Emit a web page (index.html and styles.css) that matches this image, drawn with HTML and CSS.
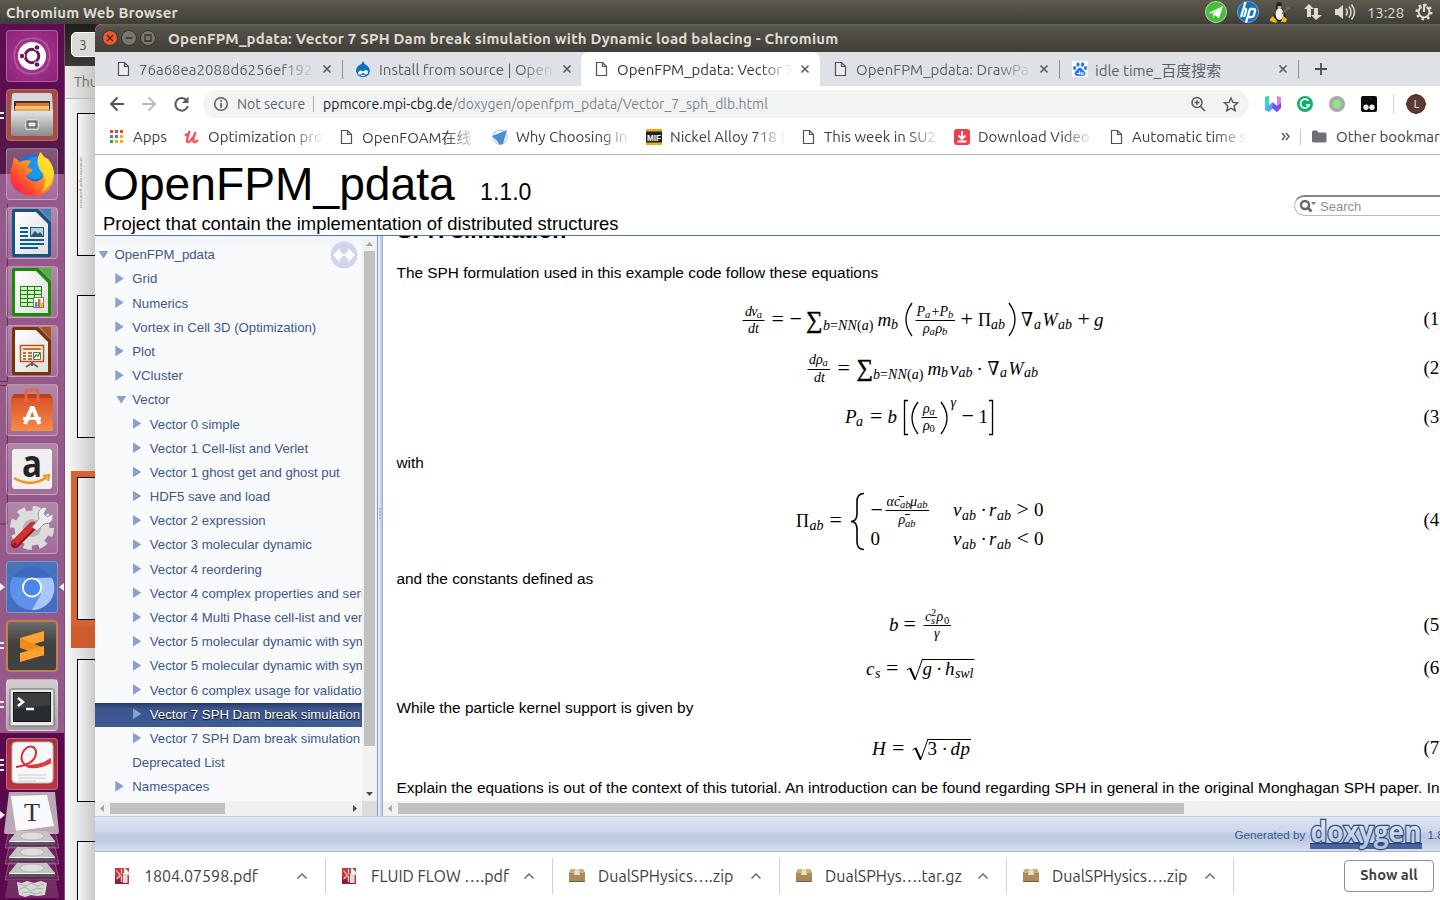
FILE: index.html
```html
<!DOCTYPE html>
<html lang="en">
<head>
<meta charset="utf-8">
<title>OpenFPM_pdata: Vector 7 SPH Dam break simulation with Dynamic load balacing</title>
<link rel="stylesheet" href="styles.css">
</head>
<body>
<svg width="0" height="0" class="defs">
  <defs>
    <symbol id="page" viewBox="0 0 16 16"><path d="M3.5 1.5h6l4 4v9h-10z M9.5 1.5v4h4" fill="#fff" fill-opacity=".4" stroke="#4d5054" stroke-width="1.2"/></symbol>
    <symbol id="close" viewBox="0 0 10 10"><path d="M1.500 1.500l7 7M8.500 1.500l-7 7" stroke="#55585c" stroke-width="1.5"/></symbol>
    <symbol id="chev" viewBox="0 0 12 8"><path d="M1.500 6.500L6 2l4.500 4.500" fill="none" stroke="#6b6e72" stroke-width="1.500"/></symbol>
    <symbol id="pdf" viewBox="0 0 16 16"><path d="M0 0h14v16H0z" fill="#d0343a"/><path d="M0 9l14 7H0z" fill="#8d1d35"/><path d="M8 5h4.500v10H8z" fill="#e2dcda"/><path d="M9 0h1l4 4v3H9z" fill="#f4f1f0" stroke="#aaa" stroke-width=".5"/><path d="M1.500 2.500l4 5-4 3.500M6.500 6V1M6.500 8v6" fill="none" stroke="#f5dcda" stroke-width="1.200"/></symbol>
    <symbol id="box" viewBox="0 0 16 16"><path d="M2 1h12l2 4v9H0V5z" fill="#a98a5b"/><path d="M2 1h12l2 4H0z" fill="#c9ad7d"/><path d="M6 1h4l1 6H5z" fill="#eadfbe"/><path d="M0 13h16v1H0z" fill="#765b35"/></symbol>
    <linearGradient id="doc" x1="0" y1="0" x2="1" y2="1"><stop offset="0" stop-color="#fff"/><stop offset="1" stop-color="#ddd"/></linearGradient>
    <linearGradient id="metal" x1="0" y1="0" x2="0" y2="1"><stop offset="0" stop-color="#e4e4e4"/><stop offset="1" stop-color="#8b8b8b"/></linearGradient>
    <linearGradient id="fox" x1="1" y1="0" x2="0" y2="1"><stop offset="0" stop-color="#fff44f"/><stop offset=".4" stop-color="#ffa01e"/><stop offset=".75" stop-color="#ff3b36"/><stop offset="1" stop-color="#d9207c"/></linearGradient>
    <linearGradient id="bag" x1="0" y1="0" x2="0" y2="1"><stop offset="0" stop-color="#d9552b"/><stop offset="1" stop-color="#f78a45"/></linearGradient>
    <linearGradient id="doxy" x1="0" y1="0" x2="0" y2="1"><stop offset="0" stop-color="#eef3fb"/><stop offset="1" stop-color="#a9bfdf"/></linearGradient>
    <symbol id="disk" viewBox="0 0 56 20"><path d="M5 1h46l4 17H1z" fill="#fff" fill-opacity=".1" stroke="#b78ab0" stroke-opacity=".5"/><path d="M13 1h30l8 10H5z" fill="#c4c4c4"/><ellipse cx="28" cy="6" rx="12" ry="4" fill="#dedede" stroke="#a6a6a6" stroke-width=".7"/><path d="M5 11h46v4H5z" fill="#555"/><path d="M5 11h46v1H5z" fill="#f4f4f4"/></symbol>
  </defs>
</svg>

<header class="panel">
  <b class="panel-title">Chromium Web Browser</b>
  <div class="tray">
    <svg class="t1" width="22" height="22"><circle cx="11" cy="11" r="10.500" fill="#43bf35" stroke="#b9dcae"/><path d="M3.500 12L18 5l-4 12.500-4-3.500-2 3v-4.500l6-4-7.500 4z" fill="#fff"/></svg>
    <svg class="t2" width="22" height="22"><circle cx="11" cy="11" r="10.500" fill="#1572b8" stroke="#5caadc"/><path d="M8.500 1L4 16M5.500 9q4.500-3 3.500 1L7 16M13 8L9 21.500M12.500 8h4q2 0 1.500 2l-1 4q-.5 2-2 2H10.500" fill="none" stroke="#fff" stroke-width="2.300"/></svg>
    <svg class="t3" width="22" height="22"><path d="M5 12Q6 8 6 5q0-4 3-4t3 4q0 3 3 7 2 8-6 8t-6-4z" fill="#222"/><ellipse cx="9.500" cy="13" rx="4" ry="6" fill="#eee"/><path d="M7 6q2.500-2 5 0-2 2.500-5 0" fill="#edb63c"/><path d="M0 18l3-3 4 5-1 2-6-2zM11 21l2-6 4 3-1 3z" fill="#f2b817"/><path d="M12 13l6-6M17 6.500l3 1" stroke="#7d6a52" stroke-width="1.700"/></svg>
    <svg class="t4" width="18" height="18"><path d="M5 1l5 5H7v8H3V6H0zM12 17l-5-5h3V5h4v7h4z" fill="#dfdbd2"/></svg>
    <svg class="t5" width="22" height="18"><path d="M1 6h3l5-4v14l-5-4H1z" fill="#dfdbd2"/><path d="M12 5.500q2.500 3.500 0 7M15 3.500q4 5.500 0 11M17.500 1.500q6 7.500 0 15" fill="none" stroke="#dfdbd2" stroke-width="1.500"/></svg>
    <span class="clock">13:28</span>
    <svg class="t6" width="18" height="18"><circle cx="9" cy="9" r="7.200" fill="none" stroke="#dfdbd2" stroke-width="2.800" stroke-dasharray="2.400 3.255"/><path d="M6.500 4A5.500 5.500 0 1 0 11.500 4M9 1v8" fill="none" stroke="#dfdbd2" stroke-width="2"/></svg>
  </div>
</header>

<div class="desktop">
  <nav class="launcher">
    <div class="tile ubuntu"><svg viewBox="0 0 52 52"><path d="M8 26C8 8 30 2 42 16M44 26c0 18-22 24-34 10M26 8c18 0 24 22 10 34M26 44C8 44 2 22 16 10" fill="none" stroke="#c57ab9" stroke-opacity=".55" stroke-width="1.500"/><circle cx="26" cy="26" r="14" fill="#fff"/><circle cx="26" cy="26" r="6.800" fill="none" stroke="#6f195c" stroke-width="3"/><g fill="#6f195c" stroke="#fff" stroke-width="1"><circle cx="16" cy="26" r="2.800"/><circle cx="31" cy="17.500" r="2.800"/><circle cx="31" cy="34.500" r="2.800"/></g></svg></div>
    <div class="tile files"><svg viewBox="0 0 52 52"><path d="M6 6q0-2 2-2h36q2 0 2 2l1 18H5z" fill="#d7d7d7"/><path d="M8 12h36v12H8z" fill="#333"/><path d="M10 14h33v8H10z" fill="#e7752d"/><path d="M9 17h34v7H9z" fill="#f6c17c"/><path d="M8 21h36" stroke="#e88335"/><path d="M5 22h42v23q0 2-2 2H7q-2 0-2-2z" fill="url(#metal)"/><rect x="19.500" y="30.500" width="13" height="10" rx="2" fill="#999" stroke="#ddd"/><rect x="22" y="33" width="8" height="5" fill="#eee" stroke="#444"/></svg></div>
    <div class="tile"><svg viewBox="0 0 52 52"><circle cx="26" cy="27" r="20" fill="#1d6fe0"/><circle cx="29" cy="20" r="11" fill="#1b95f2"/><path d="M6 18L8 9l6 5q4-3 11-1l-4 6 6 3-7 6q5 7 12 5 8-3 4-11-6-6-4-13l3-5q2 5 7 7 7 8 6 17-2 20-22 20Q5 46 4 28q0-6 2-10" fill="url(#fox)"/><path d="M34 4q2 6 8 8 8 10 4 20-3 8-11 13 7-9 3-18-8-7-6-17z" fill="#ffe32e" fill-opacity=".8"/></svg></div>
    <div class="tile"><svg viewBox="0 0 52 52"><path d="M8 2h24l13 13v33q0 2-2 2H8q-2 0-2-2V4q0-2 2-2z" fill="#0f5585"/><path d="M9 5h21l12 12v30H9z" fill="url(#doc)"/><path d="M34 2h11v12z" fill="#3b84b7"/><g stroke="#0b5c91" stroke-width="2"><path d="M14 21h8M14 25h8M14 29h8M14 33h24M14 37h24M14 41h18"/></g><rect x="24.500" y="20.500" width="13" height="9" fill="#a9d2ec" stroke="#155a89"/><path d="M25 29l4-5 3 3 2-2 3 4z" fill="#32525e"/><circle cx="35" cy="23" r="1" fill="#fc3"/></svg></div>
    <div class="tile"><svg viewBox="0 0 52 52"><path d="M8 2h24l13 13v33q0 2-2 2H8q-2 0-2-2V4q0-2 2-2z" fill="#1b8a07"/><path d="M9 5h21l12 12v30H9z" fill="url(#doc)"/><path d="M34 2h11v12z" fill="#43bb2b"/><path d="M14.500 20.500h21v20h-21zM14.500 24.500h21M14.500 28.500h21M14.500 32.500h21M14.500 36.500h21M21.500 20v20M28.500 20v20" fill="#d2f6c6" stroke="#1a870a"/><rect x="27.500" y="31.500" width="10" height="10" fill="#fff" stroke="#777"/><path d="M29 36h2.500v5H29z" fill="#3d8edb"/><path d="M32 33h2.500v8H32z" fill="#e8641b"/><path d="M35 37h2v4h-2z" fill="#f7b518"/></svg></div>
    <div class="tile"><svg viewBox="0 0 52 52"><path d="M8 2h24l13 13v33q0 2-2 2H8q-2 0-2-2V4q0-2 2-2z" fill="#7c3106"/><path d="M9 5h21l12 12v30H9z" fill="url(#doc)"/><path d="M34 2h11v12z" fill="#a5561b"/><path d="M26 38l-6 4M26 38l6 4M26 36v5" stroke="#666" stroke-width="2"/><path d="M14.500 20.500h23v16h-23z" fill="#fdf0e5" stroke="#b6541c" stroke-width="1.500"/><path d="M17 24h18" stroke="#d36b2d" stroke-width="2"/><path d="M17 28h3M17 31h3M17 34h3M22 28h4M22 31h4M22 34h4" stroke="#99481b" stroke-width="1.500"/><path d="M27.500 27.500h7v7h-7z" fill="#fff" stroke="#666"/><path d="M28 33l2-3 2 1 2-3" stroke="#2aa516" fill="none" stroke-width="1.500"/></svg></div>
    <div class="tile"><svg viewBox="0 0 52 52"><path d="M5 14l3-4h36l3 4z" fill="#b8421c"/><path d="M5 14h42v33H5z" fill="url(#bag)"/><path d="M20 18V8q0-2 2-2h8q2 0 2 2v10" fill="none" stroke="#e06a3c" stroke-width="3"/><path d="M19 40l6.500-16h1.500l6.500 16" fill="none" stroke="#fff" stroke-width="4"/><path d="M17 34.500h18" stroke="#fff" stroke-width="3"/></svg></div>
    <div class="tile"><svg viewBox="0 0 52 52"><rect x="6" y="6" width="40" height="40" rx="3" fill="#f0f0f0"/><text x="16" y="34" textLength="20" lengthAdjust="spacingAndGlyphs" class="amz">a</text><path d="M8 35q17 10 33-1" fill="none" stroke="#f59312" stroke-width="2.500"/><path d="M37 33l6-1-1 6" fill="none" stroke="#f59312" stroke-width="2"/></svg></div>
    <div class="tile"><svg viewBox="0 0 52 52"><circle cx="26" cy="26" r="19" fill="none" stroke="#dcdcdc" stroke-width="6" stroke-dasharray="8 6.920"/><circle cx="26" cy="26" r="13" fill="none" stroke="#dcdcdc" stroke-width="9"/><circle cx="26" cy="26" r="9" fill="#b9b1ba"/><path d="M9 42L27 24" stroke="#8e171b" stroke-width="8.500" stroke-linecap="round"/><path d="M9 41L27 23" stroke="#d33033" stroke-width="6" stroke-linecap="round"/><path d="M26 25l7-8q-3-9 5-12l3 1-3 6 3 3 6-3q1 10-9 10l-7 7z" fill="#eee" stroke="#8a8a8a" stroke-width=".8"/><circle cx="9" cy="42" r="1.300" fill="#6d1114"/></svg></div>
    <div class="tile chrome"><svg viewBox="0 0 52 52"><circle cx="26" cy="27" r="22" fill="#5c93e8"/><path d="M7 16A22 22 0 0 1 45 16L26 17z" fill="#3c68c2"/><path d="M26 17h20A22 22 0 0 1 26 49l9-16z" fill="#a9c6f8"/><circle cx="26" cy="26.500" r="10" fill="#fff"/><circle cx="26" cy="26.500" r="8.200" fill="#4a86ee"/></svg></div>
    <div class="tile sublime"><svg viewBox="0 0 52 52"><path d="M14 18l24-7v10l-24 7z" fill="#ffa22f"/><path d="M14 18l24 10v8L14 28z" fill="#f28a18"/><path d="M14 33l24-7v9l-24 7z" fill="#ffa22f"/></svg></div>
    <div class="tile term"><svg viewBox="0 0 52 52"><rect x="4" y="10" width="44" height="37" rx="1.500" fill="#e8e8e8" stroke="#666"/><rect x="7.500" y="13.500" width="37" height="29" fill="#292c2e" stroke="#111"/><path d="M8 14h36v12L8 30z" fill="#4a4d4f" opacity=".6"/><path d="M12 19l5 4-5 4M20 30h8" fill="none" stroke="#fff" stroke-width="2.500"/></svg></div>
    <div class="tile pdfview"><svg viewBox="0 0 52 52"><rect x="6" y="4" width="41" height="41" rx="4" fill="#f7f7f7" stroke="#bbb"/><path d="M10 29Q31 26 30 13 28 7 22 9q-8 5-6 14 7 12 29 1" fill="none" stroke="#dd2a31" stroke-width="2"/><path d="M20 27q13 1 25-7v5q-11 6-25 4z" fill="#dd3a40"/><path d="M12 37h28M12 40h28M12 43h18" stroke="#ccc"/></svg></div>
    <div class="folded">
      <svg viewBox="0 0 56 42" width="56" height="42"><path d="M5 0h46l4 40q0 2-2 2H2q-2 0-2-2z" fill="#b9aab7"/><path d="M7 4l36-1 7 31-38 5z" fill="#fafafa"/><text x="20" y="29" textLength="16" lengthAdjust="spacingAndGlyphs" class="typora">T</text></svg>
      <svg width="56" height="20"><use href="#disk"/></svg>
      <svg width="56" height="20"><use href="#disk"/></svg>
      <svg width="56" height="20"><use href="#disk"/></svg>
      <svg width="56" height="22" class="bin"><path d="M4 1h48l3 17H1z" fill="#fff" fill-opacity=".15"/><path d="M13 2l5 1 5-2 7 2 7-2 6 2-2 12-8 1-6-1-6 2-6-2z" fill="#d8d8d4"/><path d="M15 4l6 2 6-3 6 3 7-2M16 9l5-2 6 4 6-3 6 1M18 13l7-1 7 2 6-2" fill="none" stroke="#aaa"/></svg>
    </div>
    <svg class="pips" width="65" height="876"><path d="M0 88h4v2H0zM0 93h4v2H0zM0 618h4v2H0zM0 623h4v2H0zM0 677h4v2H0zM0 682h4v2H0zM0 735h4v2H0zM0 740h4v2H0zM0 745h4v2H0zM0 559l5 4-5 4zM0 787l5 4-5 4zM64 559l-5 4 5 4z" fill="#eee"/><path d="M0 357.500h7.500V180M0 361.500h7.500V500H0" fill="none" stroke="#40173b" stroke-opacity=".6"/></svg>
  </nav>

  <aside class="viewer">
    <div class="viewer-head"><span>3</span></div>
    <div class="viewer-bar">Thu</div>
    <div class="thumbs">
      <i class="thumb"><small>simulation input parameter</small></i><i class="thumb"></i><i class="thumb current"></i><i class="thumb"></i><i class="thumb"></i>
    </div>
  </aside>

  <main class="browser">
    <div class="titlebar">
      <svg width="58" height="18"><circle cx="9" cy="9" r="7.500" fill="#e95b30" stroke="#36332e"/><path d="M6 6l6 6M12 6l-6 6" stroke="#51200f" stroke-width="1.300"/><circle cx="28" cy="9" r="7.500" fill="#79766d" stroke="#36332e"/><path d="M24.500 9h7" stroke="#34322e" stroke-width="1.300"/><circle cx="47" cy="9" r="7.500" fill="#79766d" stroke="#36332e"/><path d="M44 6h6v6h-6z" fill="none" stroke="#34322e" stroke-width="1.300"/></svg>
      <b>OpenFPM_pdata: Vector 7 SPH Dam break simulation with Dynamic load balacing - Chromium</b>
    </div>
    <div class="tabs">
      <div class="tab"><svg width="16" height="16"><use href="#page"/></svg><span>76a68ea2088d6256ef192a</span><svg width="10" height="10"><use href="#close"/></svg></div>
      <div class="tab line"><svg width="16" height="16"><path d="M8 0q1 3 4 4.500Q15 7 15 10q-1 6-7 6T1 10q0-4 3.500-6Q7 3 8 0z" fill="#0876bd"/><path d="M3 12q2-4 5-1.500 4-3 5 0 0 4-3 2.500-2-2-3.500 0Q3 15 3 12z" fill="#fff"/><path d="M6 14q2 1.500 4 0" stroke="#fff" fill="none"/></svg><span>Install from source | Open</span><svg width="10" height="10"><use href="#close"/></svg></div>
      <div class="tab active"><svg width="16" height="16"><use href="#page"/></svg><span>OpenFPM_pdata: Vector 7</span><svg width="10" height="10"><use href="#close"/></svg></div>
      <div class="tab"><svg width="16" height="16"><use href="#page"/></svg><span>OpenFPM_pdata: DrawPa</span><svg width="10" height="10"><use href="#close"/></svg></div>
      <div class="tab line short"><svg width="16" height="16"><path d="M0 0h16v16H0z" fill="#fff"/><g fill="#2b77ee"><ellipse cx="6" cy="3.500" rx="1.600" ry="2.200"/><ellipse cx="10.500" cy="3.500" rx="1.600" ry="2.200"/><ellipse cx="2.700" cy="7" rx="1.600" ry="2"/><ellipse cx="13.500" cy="7" rx="1.600" ry="2"/><path d="M8 6.500q2 0 3 2.500 3 2 2.500 4T10 15H6q-3.500 0-3.500-2.500T5 9Q6 6.500 8 6.500z"/></g><path d="M5 12.500h2.500M7.500 10v3.500M9 11v2.500h2V11" stroke="#fff" fill="none"/></svg><span>idle time_百度搜索</span><svg width="10" height="10"><use href="#close"/></svg></div>
      <div class="newtab"><svg width="14" height="14"><path d="M7 1v12M1 7h12" stroke="#4a4d51" stroke-width="1.800"/></svg></div>
    </div>
    <div class="toolbar">
      <svg class="nav" width="84" height="20"><path d="M15 10H3M8.500 3.500L2 10l6.500 6.500" fill="none" stroke="#55585d" stroke-width="2"/><path d="M33 10h12M39.500 3.500L46 10l-6.500 6.500" fill="none" stroke="#babcbe" stroke-width="2"/><path d="M77.500 6.200A6.300 6.300 0 1 0 78.800 12" fill="none" stroke="#55585d" stroke-width="2"/><path d="M79.500 2.500v6.500H73z" fill="#55585d"/></svg>
      <div class="omnibox">
        <svg width="16" height="16"><circle cx="8" cy="8" r="6.300" fill="none" stroke="#5a5d61" stroke-width="1.500"/><path d="M8 7v5M8 4v1.700" stroke="#5a5d61" stroke-width="1.700"/></svg>
        <span class="sec">Not secure</span><span class="url"><em>ppmcore.mpi-cbg.de</em>/doxygen/openfpm_pdata/Vector_7_sph_dlb.html</span>
        <svg class="omni-end" width="50" height="18"><circle cx="8" cy="7.500" r="5" fill="none" stroke="#55585c" stroke-width="1.500"/><path d="M11.500 11.500l4.500 4.500M5.500 7.500h5M8 5v5" stroke="#55585c" stroke-width="1.500"/><path d="M42 3l1.900 4.400 4.800.4-3.600 3.200 1.100 4.700-4.200-2.500-4.200 2.500 1.100-4.700-3.600-3.200 4.800-.4z" fill="none" stroke="#55585c" stroke-width="1.400"/></svg>
      </div>
      <div class="exts">
        <svg width="16" height="16"><path d="M0 1l4-1v9l4-3 4 4v6L8 12l-4 4-4-2z" fill="#4fa4f4"/><path d="M0 1l4-1v9l-4 5z" fill="#35d5bf"/><path d="M12 0l4 1v10l-4 5z" fill="#e07be0"/><path d="M8 7l4 3 4-3v5l-4 4-5-4z" fill="#7a4df0"/></svg>
        <svg width="16" height="16"><circle cx="8" cy="8" r="8" fill="#13b06b"/><path d="M11.500 4.800A4.500 4.500 0 1 0 12.300 9H9" fill="none" stroke="#fff" stroke-width="1.700"/></svg>
        <svg width="16" height="16"><circle cx="8" cy="8" r="8" fill="#a9a9a9"/><circle cx="8" cy="8" r="4.300" fill="#92e28c"/></svg>
        <svg width="16" height="16"><rect width="16" height="16" rx="2" fill="#0a0a0a"/><circle cx="5" cy="11.300" r="2.700" fill="#eee"/><circle cx="11" cy="11.300" r="2.700" fill="#eee"/></svg>
        <span class="avatar">L</span>
      </div>
    </div>
    <div class="bookmarks">
      <div class="bm apps"><svg width="14" height="14"><path d="M0 0h3v3H0zM5 0h3v3H5zM10 0h3v3h-3z" fill="#ea4335"/><path d="M0 5h3v3H0zM0 10h3v3H0z" fill="#21a464"/><path d="M5 5h3v3H5z" fill="#3f7ff0"/><path d="M10 5h3v3h-3zM5 10h3v3H5zM10 10h3v3h-3z" fill="#f9ab00"/></svg><span>Apps</span></div>
      <div class="bm"><svg width="16" height="16"><path d="M1 6.500l2.500-1.500M5.500 2Q3 9 3 12.500q2.500 2 6-4.500M11.500 3Q9 9 9.500 12.500q2 1.500 4.500-1.500" fill="none" stroke="#f0545a" stroke-width="2.400"/></svg><span>Optimization pro</span></div>
      <div class="bm"><svg width="16" height="16"><use href="#page"/></svg><span>OpenFOAM在线</span></div>
      <div class="bm"><svg width="16" height="16"><circle cx="8" cy="8" r="7" fill="none" stroke="#b9d3ec" stroke-width="1.500"/><path d="M0 7l15-6-4 14-3 1-3-4z" fill="#4a90d0"/></svg><span>Why Choosing In</span></div>
      <div class="bm"><svg width="16" height="16"><path d="M0 0h16v16H0z" fill="#20242a"/><path d="M0 0h16v2.500H0zM0 13.500h16V16H0z" fill="#f2a914"/><text x="1" y="11.500" textLength="14" lengthAdjust="spacingAndGlyphs" class="mif">MIF</text></svg><span>Nickel Alloy 718 (</span></div>
      <div class="bm"><svg width="16" height="16"><use href="#page"/></svg><span>This week in SU2</span></div>
      <div class="bm"><svg width="16" height="16"><rect width="16" height="16" rx="3" fill="#f13d4c"/><path d="M8 2v7M4.500 6.500L8 10l3.500-3.500M3.500 12.500h9" fill="none" stroke="#fff" stroke-width="2"/></svg><span>Download Video</span></div>
      <div class="bm"><svg width="16" height="16"><use href="#page"/></svg><span>Automatic time s</span></div>
      <div class="more"><svg width="9" height="9"><path d="M1 1l3 3.500L1 8M5 1l3 3.500L5 8" fill="none" stroke="#55585c" stroke-width="1.400"/></svg></div>
      <div class="other"><svg width="15" height="13"><path d="M0 2q0-1.500 1.500-1.500H5l1.500 2H13q1.500 0 1.500 1.500v7q0 1.500-1.500 1.500H1.500Q0 12.500 0 11z" fill="#6d7175"/></svg><span>Other bookmarks</span></div>
    </div>

    <div class="dox-head">
      <div>
        <h1>OpenFPM_pdata <small>1.1.0</small></h1>
        <p>Project that contain the implementation of distributed structures</p>
      </div>
      <div class="search"><svg width="18" height="14"><circle cx="6" cy="6" r="4" fill="none" stroke="#666" stroke-width="2.400"/><path d="M8.500 8.500l4 4" stroke="#666" stroke-width="3"/><path d="M12 3h5l-2.500 3z" fill="#777"/></svg><span>Search</span></div>
    </div>

    <div class="panes">
      <div class="side">
        <div class="side-main">
          <ul class="tree">
            <li class="l0 open">OpenFPM_pdata</li>
            <li class="l1">Grid</li>
            <li class="l1">Numerics</li>
            <li class="l1">Vortex in Cell 3D (Optimization)</li>
            <li class="l1">Plot</li>
            <li class="l1">VCluster</li>
            <li class="l1 open">Vector</li>
            <li class="l2">Vector 0 simple</li>
            <li class="l2">Vector 1 Cell-list and Verlet</li>
            <li class="l2">Vector 1 ghost get and ghost put</li>
            <li class="l2">HDF5 save and load</li>
            <li class="l2">Vector 2 expression</li>
            <li class="l2">Vector 3 molecular dynamic</li>
            <li class="l2">Vector 4 reordering</li>
            <li class="l2">Vector 4 complex properties and serialization</li>
            <li class="l2">Vector 4 Multi Phase cell-list and verlet</li>
            <li class="l2">Vector 5 molecular dynamic with symmetric</li>
            <li class="l2">Vector 5 molecular dynamic with symmetric</li>
            <li class="l2">Vector 6 complex usage for validation</li>
            <li class="l2 sel">Vector 7 SPH Dam break simulation with</li>
            <li class="l2">Vector 7 SPH Dam break simulation with</li>
            <li class="l1 leaf">Deprecated List</li>
            <li class="l1">Namespaces</li>
          </ul>
          <svg class="sync" width="28" height="28"><circle cx="14" cy="14" r="13.500" fill="#ced7eb"/><path d="M3 14l7-7v4h2v2h4v-2h2V7l7 7-7 7v-4h-2v-2h-4v2h-2v4z" fill="#fff"/></svg>
        </div>
        <div class="vbar"><svg width="15" height="15"><path d="M4 10l3.500-4L11 10z" fill="#a3a3a3"/></svg><i></i><svg width="15" height="15"><path d="M4 6l3.500 4L11 6z" fill="#4d4d4d"/></svg></div>
        <div class="hbar"><svg width="15" height="15"><path d="M9 4L5 7.500 9 11z" fill="#a3a3a3"/></svg><i></i><svg width="15" height="15"><path d="M6 4l4 3.500L6 11z" fill="#4d4d4d"/></svg></div>
        <div class="corner"></div>
      </div>
      <div class="splitter"><svg width="6" height="12"><path d="M2 1h2M2 4h2M2 7h2M2 10h2" stroke="#8099c9"/></svg></div>
      <div class="content">
        <div class="doc">
          <h2>SPH simulation</h2>
          <p>The SPH formulation used in this example code follow these equations</p>
          <svg class="math" viewBox="383 284 1057 168" height="168">
            <g><text class="s" x="745" y="315.500" textLength="17">dv<tspan class="x" dy="2">a</tspan></text><text class="s" x="748" y="333">dt</text>
            <text x="771.500" y="326" class="r op">=</text><text x="789.500" y="326" class="r op">−</text><text class="r sum" x="806" y="327.500" textLength="16.500" lengthAdjust="spacingAndGlyphs">∑</text><text class="s" x="823" y="330" textLength="50.500">b<tspan class="r">=</tspan>NN<tspan class="r">(</tspan>a<tspan class="r">)</tspan></text>
            <text x="877.500" y="326">m</text><text class="s" x="891" y="328.500">b</text>
            <text class="s" x="916.500" y="315.500">P</text><text class="x" x="925" y="317.500">a</text><text class="s r" x="931.500" y="315.500">+</text><text class="s" x="939.500" y="315.500">P</text><text class="x" x="948" y="317.500">b</text>
            <text class="s" x="923" y="332.500">ρ</text><text class="x" x="929.500" y="334.500">a</text><text class="s" x="935.500" y="332.500">ρ</text><text class="x" x="942" y="334.500">b</text>
            <text class="r op" x="960.500" y="326">+</text><text class="r" x="978" y="326" textLength="13" lengthAdjust="spacingAndGlyphs">Π</text><text class="s" x="991" y="328.500">ab</text>
            <text class="r" x="1021" y="326" textLength="12" lengthAdjust="spacingAndGlyphs">∇</text><text class="s" x="1034" y="328.500">a</text><text x="1042.500" y="326" textLength="15" lengthAdjust="spacingAndGlyphs">W</text><text class="s" x="1058" y="328.500">ab</text><text class="r op" x="1077.500" y="326">+</text><text x="1094" y="326">g</text><text class="r" x="1423.500" y="325">(1)</text></g>
            <g><text class="s" x="809" y="364">dρ</text><text class="x" x="822.500" y="366">a</text><text class="s" x="814" y="382">dt</text><text class="r op" x="837.500" y="375">=</text><text class="r sum" x="856.500" y="376" textLength="16.500" lengthAdjust="spacingAndGlyphs">∑</text><text class="s" x="873" y="379" textLength="50.500">b<tspan class="r">=</tspan>NN<tspan class="r">(</tspan>a<tspan class="r">)</tspan></text>
            <text x="927.500" y="374.500">m</text><text class="s" x="941" y="377">b</text><text x="950" y="374.500">v</text><text class="s" x="958.500" y="377">ab</text><text class="r" x="976.500" y="374.500">·</text><text class="r" x="987.500" y="374.500" textLength="12" lengthAdjust="spacingAndGlyphs">∇</text><text class="s" x="1000" y="377">a</text><text x="1008.500" y="374.500" textLength="15" lengthAdjust="spacingAndGlyphs">W</text><text class="s" x="1024" y="377">ab</text><text class="r" x="1423.500" y="374">(2)</text></g>
            <g><text x="845" y="423">P</text><text class="s" x="856" y="426">a</text><text class="r op" x="870" y="423">=</text><text x="887.500" y="423">b</text><text class="s" x="923" y="413">ρ</text><text class="x" x="929.500" y="415">a</text><text class="s" x="923" y="429.500">ρ</text><text class="x r" x="929.500" y="432">0</text><text class="s" x="950.500" y="406.500">γ</text><text class="r op" x="961.500" y="423">−</text><text class="r" x="978.500" y="423">1</text><text class="r" x="1423.500" y="422.500">(3)</text></g>
            <path class="rule" d="M742.500 320.500h22M915.500 320.500h39.500M807.500 369.500h22.500M921.500 417.500h15.500"/>
            <path class="delim" d="M912 303q-12 16.500 0 33M1009 303q12 16.500 0 33M918 402q-12 16 0 32M941 402q12 16 0 32M908 400.500h-3.500v34h3.500M989 400.500h3.500v34H989"/>
          </svg>
          <p>with</p>
          <svg class="math" viewBox="383 474 1057 94" height="94">
            <text class="r" x="796" y="526.500" textLength="13" lengthAdjust="spacingAndGlyphs">Π</text><text class="s" x="809.500" y="530">ab</text><text class="r op" x="829.500" y="526.500">=</text><text class="r op" x="870.500" y="516.500">−</text>
            <text class="s" x="886.500" y="505.500">α</text><text class="s" x="894" y="505.500">c</text><text class="x" x="900" y="507.500">ab</text><text class="s" x="910" y="505.500">μ</text><text class="x" x="917" y="507.500">ab</text>
            <text class="s" x="898.500" y="524">ρ</text><text class="x" x="905" y="527">ab</text>
            <text x="953" y="516">v</text><text class="s" x="962" y="519.500">ab</text><text class="r" x="980.500" y="516">·</text><text x="989" y="516">r</text><text class="s" x="997" y="519.500">ab</text><text class="r op" x="1016.500" y="516">&gt;</text><text class="r" x="1034" y="516">0</text>
            <text class="r" x="870.500" y="545">0</text><text x="953" y="545">v</text><text class="s" x="962" y="548.500">ab</text><text class="r" x="980.500" y="545">·</text><text x="989" y="545">r</text><text class="s" x="997" y="548.500">ab</text><text class="r op" x="1016.500" y="545">&lt;</text><text class="r" x="1034" y="545">0</text><text class="r" x="1423.500" y="526">(4)</text>
            <path class="rule" d="M885.500 510.500h43.500M899 496.500h5M905 514.500h5"/>
            <path class="delim brace" d="M864 493.500q-7 0-7 8v12q0 8-6 8 6 0 6 8v12q0 8 7 8"/>
          </svg>
          <p>and the constants defined as</p>
          <svg class="math" viewBox="383 590 1057 107" height="107">
            <text x="889" y="631">b</text><text class="r op" x="903.500" y="631">=</text><text class="s" x="925" y="620.500">c</text><text class="x r" x="931" y="615.500">2</text><text class="x" x="931" y="624">s</text><text class="s" x="936.500" y="620.500">ρ</text><text class="x r" x="944" y="624">0</text><text class="s" x="934" y="637.500">γ</text><text class="r" x="1423.500" y="631">(5)</text>
            <text x="866" y="675">c</text><text class="s" x="875" y="677.500">s</text><text class="r op" x="886" y="675">=</text><text x="922.500" y="675">g</text><text class="r" x="936" y="675">·</text><text x="945" y="675">h</text><text class="s" x="955" y="677.500" textLength="18.500">swl</text><text class="r" x="1423.500" y="674">(6)</text>
            <path class="rule" d="M923.500 625.500h27.500M922 659.500h52.500"/><path class="root" d="M907 670l3-2 5 12 7.500-21"/><path class="rootb" d="M910 668l5 11"/>
          </svg>
          <p>While the particle kernel support is given by</p>
          <svg class="math" viewBox="383 719 1057 58" height="58">
            <text x="872" y="754.500">H</text><text class="r op" x="892" y="754.500">=</text><text class="r" x="927.500" y="754.500">3</text><text class="r" x="941.500" y="754.500">·</text><text x="950.500" y="754.500" textLength="19.500">dp</text><text class="r" x="1423.500" y="754">(7)</text>
            <path class="rule" d="M927.500 739.500h43.500"/><path class="root" d="M912.500 750l3-2 5 12 7.500-21"/><path class="rootb" d="M915.500 748l5 11"/>
          </svg>
          <p>Explain the equations is out of the context of this tutorial. An introduction can be found regarding SPH in general in the original Monghagan SPH paper. In this</p>
        </div>
        <div class="hbar"><svg width="15" height="15"><path d="M9 4L5 7.500 9 11z" fill="#a3a3a3"/></svg><i></i></div>
      </div>
    </div>

    <footer class="dox-foot"><span>Generated by</span><svg width="116" height="34"><path d="M2 26h112v6H2z" fill="#47649f"/><path d="M2 26.500h112" stroke="#2a3f6c"/><text x="2.500" y="24.500" textLength="111" lengthAdjust="spacingAndGlyphs" class="doxlogo">doxygen</text></svg><span>1.8.13</span></footer>

    <div class="downloads">
      <div class="dl"><svg width="14" height="16"><use href="#pdf" width="16" height="16"/></svg><span>1804.07598.pdf</span><svg width="12" height="8"><use href="#chev"/></svg></div>
      <div class="dl"><svg width="14" height="16"><use href="#pdf" width="16" height="16"/></svg><span>FLUID FLOW ….pdf</span><svg width="12" height="8"><use href="#chev"/></svg></div>
      <div class="dl"><svg width="16" height="16"><use href="#box"/></svg><span>DualSPHysics….zip</span><svg width="12" height="8"><use href="#chev"/></svg></div>
      <div class="dl"><svg width="16" height="16"><use href="#box"/></svg><span>DualSPHys….tar.gz</span><svg width="12" height="8"><use href="#chev"/></svg></div>
      <div class="dl"><svg width="16" height="16"><use href="#box"/></svg><span>DualSPHysics….zip</span><svg width="12" height="8"><use href="#chev"/></svg></div>
      <button>Show all</button>
    </div>
  </main>
</div>
</body>
</html>
```
FILE: styles.css
```css
* { box-sizing: border-box; }
body { margin: 0; width: 1440px; height: 900px; overflow: hidden; background: #5b0a4e; font-family: Ubuntu, "Noto Sans", "Noto Sans CJK SC", sans-serif; font-size: 14px; color: #3c4043; }
svg { display: block; flex: none; }
.defs { position: absolute; }

.panel { height: 24px; display: flex; align-items: center; justify-content: space-between; padding: 0 7px 0 6px; background: linear-gradient(#5d5a4f, #57544b 20%, #403e39); color: #dfdbd2; }
.panel-title { font-size: 15px; letter-spacing: .13px; }
.tray { display: flex; align-items: center; }
.t2 { margin-left: 10px; }
.t3 { margin-left: 11px; }
.t4 { margin-left: 12px; }
.t5 { margin-left: 12px; }
.clock { width: 37px; margin-left: 11px; font-size: 15px; letter-spacing: -.1px; }
.t6 { margin-left: 11px; }

.desktop { display: flex; height: 876px; }
.launcher { position: relative; width: 65px; padding: 6px 0 0 6px; display: flex; flex-direction: column; gap: 7px; border-right: 1px solid #7d4a74; background: linear-gradient(#5e0d50 0 80px, #56184a 80px 150px, #95598a 150px 709px, #5c084d 709px); }
.tile { position: relative; z-index: 1; flex: none; width: 52px; height: 52px; border: 1px solid rgba(255,255,255,.28); border-radius: 4px; background: linear-gradient(rgba(255,255,255,.28), rgba(255,255,255,.12)); }
.tile svg { width: 52px; height: 52px; margin: -1px; }
.ubuntu { background: radial-gradient(#a5408f, #91217c); }
.files { background: #a34c4c; border-color: #b86c64; }
.chrome { background: linear-gradient(#4876bc, #456bc0); }
.sublime { background: linear-gradient(#6b6b6a, #414142 45%); border: 2px solid #bd8048; }
.sublime svg { margin: -2px; }
.term { background: linear-gradient(#d5cdd3, #a79ba6); }
.pdfview { background: linear-gradient(#a72f43, #ba3540); }
.amz { font: bold 38px "Open Sans", sans-serif; fill: #252525; }
.typora { font: 25px "Liberation Serif", serif; fill: #333; }
.folded { margin: -5px 0 0 -2px; height: 110px; overflow: hidden; }
.folded svg + svg { margin-top: -4px; }
.folded .bin { margin-top: -2px; }
.pips { position: absolute; left: 0; top: 0; }

.viewer { width: 30px; flex: none; overflow: hidden; background: linear-gradient(90deg, #fafafa, #dcdcdc 65%, #c8c8c8); }
.viewer-head { height: 42px; padding: 8px 0 0 6px; background: linear-gradient(#1f1e1b, #3b3a36); }
.viewer-head span { display: block; width: 40px; height: 25px; padding-left: 7px; border: 1px solid #fff; border-radius: 5px; background: #dcdad7; font-size: 14px; line-height: 24px; color: #555; }
.viewer-bar { height: 33px; padding-left: 9px; line-height: 33px; color: #6d6b68; background: linear-gradient(90deg, #eeecea, #c9c7c4); border-bottom: 1px solid #bbb; }
.thumbs { display: flex; flex-direction: column; gap: 39px; padding: 14px 0 0 12px; }
.thumb { flex: none; width: 40px; height: 143px; border: 1px solid #000; background: linear-gradient(90deg, #f7f7f7, #c8c8c8 45%); }
.thumb small { display: block; writing-mode: vertical-rl; font: 4px "Noto Sans", sans-serif; margin: 43px 0 0 1px; color: #888; }
.current { outline: 0; box-shadow: 0 0 0 6px #d5622f, 0 22px 0 6px #cc5c2b; }

.browser { width: 1345px; flex: none; display: flex; flex-direction: column; background: #fff; border-top-left-radius: 7px; overflow: hidden; }
.titlebar { height: 28px; display: flex; align-items: center; padding: 0 0 0 6px; gap: 9px; background: linear-gradient(#6a675c, #56534a 10%, #403e39); color: #dfdbd2; font-size: 15px; letter-spacing: .2px; white-space: nowrap; }
.titlebar b { width: 680px; }

.tabs { height: 34px; display: flex; padding-left: 8px; background: #dee1e6; font-size: 15px; }
.tab { width: 239px; display: flex; align-items: center; padding-left: 12px; color: #5c6065; }
.tab > span { width: 177px; margin: 0 6px 0 8px; overflow: hidden; white-space: nowrap; -webkit-mask-image: linear-gradient(90deg, #000 142px, transparent 176px); mask-image: linear-gradient(90deg, #000 142px, transparent 176px); }
.line { padding-left: 13px; background: linear-gradient(#8f9398, #8f9398) 0 8px / 1px 19px no-repeat; }
.short > span { -webkit-mask-image: none; mask-image: none; margin-left: 7px; }
.active { background: #fff; color: #333639; border-radius: 8px 8px 0 0; }
.newtab { display: flex; align-items: center; padding-left: 16px; background: linear-gradient(#8f9398, #8f9398) 0 8px / 1px 19px no-repeat; }

.toolbar { height: 36px; display: flex; align-items: center; padding-left: 14px; }
.nav { margin-right: 10px; }
.omnibox { width: 1046px; height: 28px; display: flex; align-items: center; padding-left: 10px; border-radius: 14px; background: #f1f3f4; }
.sec { width: 77px; margin-left: 8px; padding-right: 8px; border-right: 1px solid #a5a8ab; line-height: 16px; color: #5f6368; white-space: nowrap; }
.url { margin-left: 9px; color: #80868b; white-space: nowrap; }
.url em { font-style: normal; color: #202124; }
.omni-end { margin: 0 10px 0 auto; }
.exts { display: flex; align-items: center; gap: 16px; padding-left: 16px; }
.avatar { width: 33px; height: 20px; padding-left: 13px; color: #fff; font-size: 11px; line-height: 20px; text-align: center; border-left: 1px solid #cfd1d4; background: radial-gradient(circle at 22px 10px, #5b3a31 9.500px, transparent 10px); }

.bookmarks { height: 33px; display: flex; align-items: center; padding: 0 0 3px 15px; border-bottom: 1px solid #b6b6b6; font-size: 15px; }
.bm { width: 154px; flex: none; display: flex; align-items: center; gap: 8px; }
.bm > span { width: 116px; overflow: hidden; white-space: nowrap; -webkit-mask-image: linear-gradient(90deg, #000 84px, transparent 116px); mask-image: linear-gradient(90deg, #000 84px, transparent 116px); }
.apps { width: 74px; gap: 9px; }
.apps > span { width: auto; -webkit-mask-image: none; mask-image: none; }
.mif { font: bold 9px "Liberation Sans", sans-serif; fill: #fff; }
.more { flex: none; width: 38px; padding-left: 19px; }
.other { display: flex; flex: none; align-items: center; gap: 9px; padding-left: 11px; border-left: 1px solid #c6c8ca; line-height: 16px; white-space: nowrap; }

.dox-head { height: 81px; display: flex; justify-content: space-between; padding-left: 8px; border-bottom: 1px solid #5373b4; font-family: "Liberation Sans", Arial, sans-serif; color: #000; }
.dox-head h1 { margin: 0; font-weight: 400; font-size: 46.2px; line-height: 58px; height: 57px; white-space: pre; }
.dox-head h1 small { margin-left: 12.500px; font-size: 23.1px; line-height: 24px; }
.dox-head p { margin: 0; font-size: 18.45px; line-height: 24px; }
.search { width: 146px; height: 21px; margin-top: 40px; display: flex; align-items: center; padding-left: 4px; border: 1px solid #bbb; border-top: 2px solid #858585; border-right: 0; border-radius: 11px 0 0 11px; font-size: 13px; color: #909090; }
.search span { padding: 1px 0 0 3px; }

.panes { height: 580px; display: flex; font-family: "Liberation Sans", Arial, sans-serif; }
.side { width: 282px; display: grid; grid-template: 565px 15px / 267px 15px; }
.side-main { position: relative; overflow: hidden; background: linear-gradient(#f0f3f9, #f9fafc 14px); }
.tree { margin: 0; padding: 7.200px 0 0; list-style: none; font-size: 13.2px; line-height: 24px; color: #3d578c; }
.tree li { height: 24.200px; white-space: nowrap; display: flex; }
.tree li::before { content: ""; flex: none; width: 8.500px; height: 11px; margin: 5.500px 8.500px 0 0; background: #8aa0cd; clip-path: polygon(0 0, 100% 50%, 0 100%); }
.tree .open::before { width: 10px; height: 8px; margin: 7.500px 6px 0 -1px; clip-path: polygon(0 0, 100% 0, 50% 100%); }
.tree .leaf::before { background: none; }
.tree .l0 { padding-left: 4.500px; }
.tree .l1 { padding-left: 20.300px; }
.tree .l1.open { padding-left: 22.300px; }
.tree .l2 { padding-left: 37.800px; }
.tree .sel { color: #fff; text-shadow: 0 1px 1px #000; background: linear-gradient(#26395f, #3b558c 22%, #3f5b97); }
.sync { position: absolute; left: 235px; top: 5px; }
.vbar { display: flex; flex-direction: column; background: #f1f1f1; }
.vbar i { width: 11px; height: 495px; margin: 0 auto 40px 2px; background: #c1c1c1; }
.hbar { display: flex; align-items: center; background: #f0f0f0; height: 15px; }
.side .hbar i { width: 115px; height: 11px; margin-right: 122px; background: #c1c1c1; }
.content .hbar i { width: 786px; height: 11px; background: #c1c1c1; }
.corner { background: #dcdcdc; }
.splitter { width: 6px; display: flex; align-items: center; padding-bottom: 24px; background: linear-gradient(90deg, #8099c9 0 1px, #e6ebf5 1px 3px, #c3cfe6 3px 5px, #9fb2d8 5px); }
.content { width: 1057px; overflow: hidden; }
.doc { height: 565px; overflow: hidden; color: #000; }
.doc h2 { margin: -18px 0 0 14px; height: 44px; font-size: 23.1px; line-height: 24px; }
.doc p { margin: 0; padding-left: 13.500px; height: 22px; line-height: 22px; font-size: 15.4px; white-space: nowrap; }
.math { width: 1057px; font: italic 19px "Liberation Serif", "DejaVu Serif", serif; }
.math .r { font-style: normal; }
.math .op { font-size: 22px; }
.math .s { font-size: 14px; }
.math .x { font-size: 10.500px; }
.math .sum { font-size: 24px; stroke: #000; stroke-width: .5; }
.rule { stroke: #000; stroke-width: 1; fill: none; }
.delim { stroke: #000; stroke-width: 1.3; fill: none; }
.brace { stroke-width: 1.6; }
.root { stroke: #000; fill: none; stroke-width: 1; }
.rootb { stroke: #000; stroke-width: 2; }

.dox-foot { height: 36px; display: flex; align-items: center; justify-content: flex-end; gap: 3px; margin-right: -20px; border-top: 1px solid #c2cde4; border-bottom: 1px solid #aab3c4; background: linear-gradient(#dde4f1, #cdd7ea 44%, #bccae4 50%, #bfcbe5 70%, #d6deee); font: 11.730px "Liberation Sans", Arial, sans-serif; color: #3d578c; white-space: nowrap; }
.doxlogo { font: bold 29px "Open Sans", "Noto Sans", sans-serif; fill: url(#doxy); stroke: #354a79; stroke-width: 2.500; paint-order: stroke; }

.downloads { height: 48px; display: flex; align-items: center; padding-left: 4px; background: #fff; }
.dl { width: 227px; height: 36px; display: flex; align-items: center; padding-left: 16px; border-right: 1px solid #d0d2d4; }
.dl span { width: 141px; margin: 0 11px 0 13px; font-size: 16px; white-space: nowrap; }
.dl svg:first-child { width: 16px; }
.downloads button { width: 90px; height: 32px; margin-left: 110px; padding: 0 0 3px; border: 1px solid #8b8e91; border-radius: 4px; background: #fff; font: bold 14.700px Ubuntu, "Noto Sans", sans-serif; color: #3c4043; }
```
